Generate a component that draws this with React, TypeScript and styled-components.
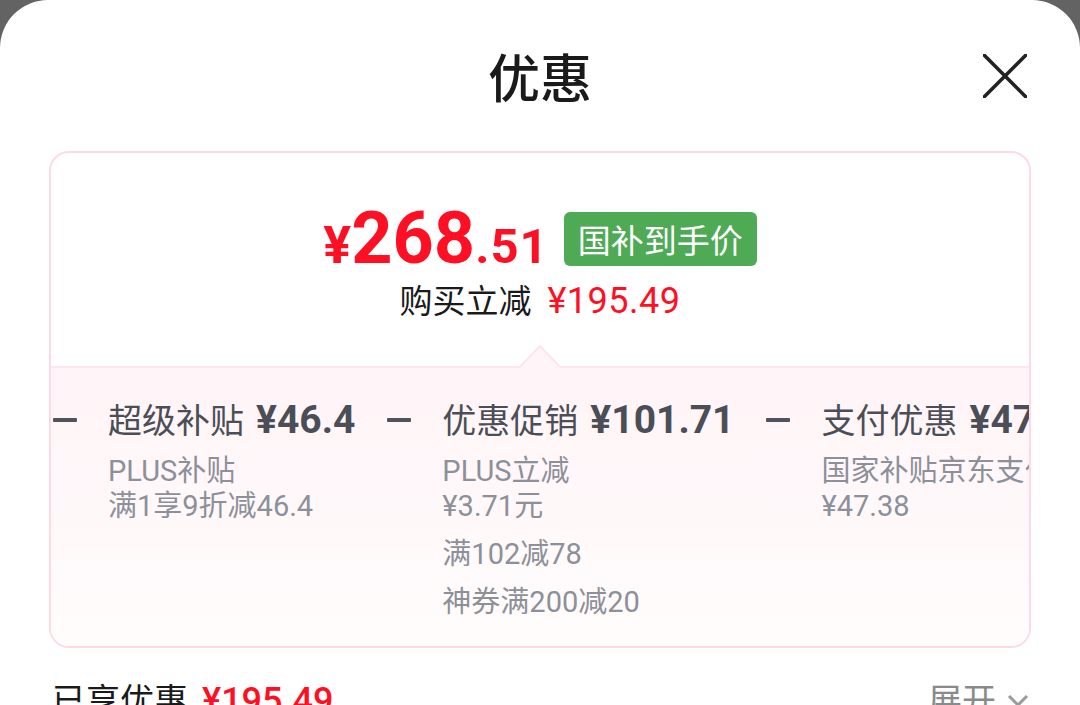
import React from "react";
import styled, { createGlobalStyle } from "styled-components";

const GlobalStyle = createGlobalStyle`
  html, body {
    margin: 0;
    padding: 0;
    background: #636363;
  }
  body {
    font-family: Roboto, "Noto Sans CJK SC", sans-serif;
    -webkit-font-smoothing: antialiased;
  }
`;

interface Group {
  lines: string[];
}

interface Deal {
  name: string;
  amount: string;
  groups: Group[];
}

const deals: Deal[] = [
  {
    name: "超级补贴",
    amount: "¥46.4",
    groups: [{ lines: ["PLUS补贴", "满1享9折减46.4"] }],
  },
  {
    name: "优惠促销",
    amount: "¥101.71",
    groups: [
      { lines: ["PLUS立减", "¥3.71元"] },
      { lines: ["满102减78"] },
      { lines: ["神券满200减20"] },
    ],
  },
  {
    name: "支付优惠",
    amount: "¥47.38",
    groups: [{ lines: ["国家补贴京东支付立减", "¥47.38"] }],
  },
];

const Sheet = styled.div`
  background: #fff;
  border-radius: 48px 48px 0 0;
  height: 705px;
  overflow: hidden;
`;

const Header = styled.header`
  display: grid;
  grid-template-columns: 1fr auto 1fr;
  align-items: center;
  height: 151px;
  padding: 0 53px;
  box-sizing: border-box;
`;

const Title = styled.h1`
  grid-column: 2;
  margin: 0;
  font-size: 52px;
  font-weight: 500;
  color: #1a1a1a;
  line-height: 1;
  font-family: "Noto Sans CJK SC", sans-serif;
`;

const CloseButton = styled.button`
  justify-self: end;
  width: 44px;
  height: 44px;
  padding: 0;
  border: 0;
  background: none;
  display: flex;
  align-items: center;
  justify-content: center;
  svg {
    display: block;
  }
`;

const Card = styled.section`
  margin: 0 49px;
  border: 2px solid #ffd9e5;
  border-radius: 20px;
  overflow: hidden;
`;

const Summary = styled.div`
  height: 213px;
  padding-top: 50px;
  box-sizing: border-box;
  display: flex;
  flex-direction: column;
  align-items: center;
`;

const PriceRow = styled.div`
  display: flex;
  align-items: center;
  gap: 15px;
`;

const Price = styled.div`
  display: flex;
  align-items: baseline;
  color: #ff0f23;
  font-weight: 700;
  line-height: 1;
`;

const PricePart = styled.span<{ $size: number; $spacing?: number }>`
  font-size: ${(p) => p.$size}px;
  letter-spacing: ${(p) => p.$spacing ?? 0}px;
`;

const Badge = styled.span`
  background: #4faa56;
  color: #fff;
  border-radius: 6px;
  font-size: 33px;
  line-height: 54px;
  padding: 0 14px;
  font-family: "Noto Sans CJK SC", sans-serif;
`;

const SavedRow = styled.div`
  margin-top: 4px;
  display: flex;
  align-items: baseline;
  gap: 16px;
  font-size: 34px;
  line-height: 40px;
  color: #1a1a1a;
`;

const SavedLabel = styled.span`
  font-family: "Noto Sans CJK SC", sans-serif;
  font-size: 33px;
`;

const Red = styled.span`
  color: #ff0f23;
`;

const SavedAmount = styled(Red)`
  font-size: 36px;
  font-weight: 400;
  letter-spacing: 0.5px;
`;

const Breakdown = styled.div`
  position: relative;
  height: 278px;
  border-top: 2px solid #ffe5ed;
  background: linear-gradient(#fff4f7, #fffcfc);
`;

const Notch = styled.svg`
  position: absolute;
  left: 50%;
  top: -24px;
  margin-left: -25px;
`;

const Row = styled.div`
  display: flex;
  align-items: flex-start;
  padding: 32px 0 0 2px;
  white-space: nowrap;
  overflow: hidden;
`;

const Minus = styled.span`
  flex: none;
  width: 24px;
  height: 4px;
  margin: 18px 31px 0 0;
  background: #50535b;
  border-radius: 1px;
`;

const DealBlock = styled.div`
  flex: none;
  margin-right: 32px;
`;

const DealTitle = styled.div`
  font-size: 34px;
  line-height: 40px;
  color: #4b4e56;
  b {
    font-size: 39px;
    font-weight: 700;
    margin-left: 12px;
  }
`;

const DealGroup = styled.div`
  margin-top: 13px;
  &:first-of-type {
    margin-top: -4px;
  }
`;

const DealLine = styled.div`
  font-size: 29px;
  line-height: 35px;
  color: #8d9099;
`;

const Footer = styled.div`
  display: flex;
  justify-content: space-between;
  align-items: center;
  padding: 33px 50px 0 52px;
  font-size: 34px;
  line-height: 40px;
`;

const Label = styled.span`
  color: #1a1a1a;
  span {
    margin-left: 14px;
    font-size: 36px;
    font-weight: 500;
  }
`;

const Expand = styled.span`
  display: flex;
  align-items: center;
  gap: 10px;
  color: #8a8a8a;
  font-size: 34px;
`;

export default function App() {
  return (
    <>
      <GlobalStyle />
      <Sheet>
        <Header>
          <Title>优惠</Title>
          <CloseButton aria-label="关闭">
            <svg width="44" height="44" viewBox="0 0 44 44">
              <path
                d="M1 1L43 43M43 1L1 43"
                stroke="#222"
                strokeWidth="3.6"
                strokeLinecap="round"
              />
            </svg>
          </CloseButton>
        </Header>
        <Card>
          <Summary>
            <PriceRow>
              <Price>
                <PricePart $size={52}>¥</PricePart>
                <PricePart $size={72}>268</PricePart>
                <PricePart $size={49} $spacing={1}>.51</PricePart>
              </Price>
              <Badge>国补到手价</Badge>
            </PriceRow>
            <SavedRow>
              <SavedLabel>购买立减</SavedLabel>
              <SavedAmount>¥195.49</SavedAmount>
            </SavedRow>
          </Summary>
          <Breakdown>
            <Notch width="50" height="26" viewBox="0 0 50 26">
              <polygon points="2,26 25,2 48,26" fill="#fff4f7" stroke="#ffe5ed" strokeWidth="2" />
              <rect x="0" y="24" width="50" height="2" fill="#fff4f7" />
            </Notch>
            <Row>
              {deals.map((d) => (
                <React.Fragment key={d.name}>
                  <Minus />
                  <DealBlock>
                    <DealTitle>
                      {d.name}
                      <b>{d.amount}</b>
                    </DealTitle>
                    {d.groups.map((g, i) => (
                      <DealGroup key={i}>
                        {g.lines.map((l) => (
                          <DealLine key={l}>{l}</DealLine>
                        ))}
                      </DealGroup>
                    ))}
                  </DealBlock>
                </React.Fragment>
              ))}
            </Row>
          </Breakdown>
        </Card>
        <Footer>
          <Label>
            已享优惠<Red>¥195.49</Red>
          </Label>
          <Expand>
            展开
            <svg width="24" height="16" viewBox="0 0 24 16">
              <path d="M3 3L12 12L21 3" fill="none" stroke="#9a9a9a" strokeWidth="3" />
            </svg>
          </Expand>
        </Footer>
      </Sheet>
    </>
  );
}
